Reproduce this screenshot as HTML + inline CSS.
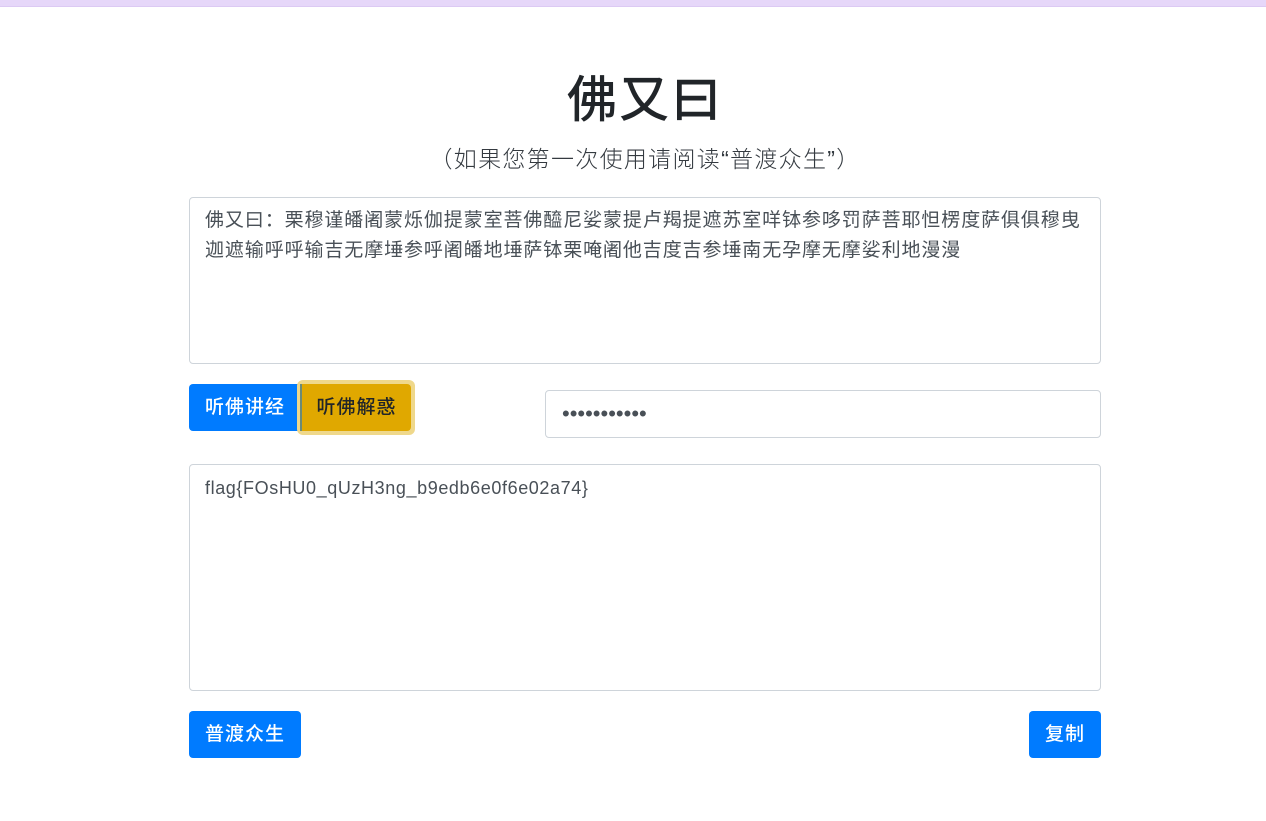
<!DOCTYPE html>
<html><head><meta charset="utf-8"><style>
body{margin:0;background:#fff;font-family:"Liberation Sans","Noto Sans CJK SC",sans-serif;color:#212529;width:1266px;height:821px;overflow:hidden;position:relative}
.top{position:absolute;left:0;top:0;width:1266px;height:6px;background:#e6d7f9;border-bottom:1px solid #dccaf3}
h1{position:absolute;top:68px;left:189px;width:912px;text-align:center;margin:0;font-size:50px;font-weight:500;line-height:64px;letter-spacing:2px}
.sub{position:absolute;top:142px;left:189px;width:912px;text-align:center;font-size:23px;font-weight:300;color:#343a40;line-height:34px;letter-spacing:1.3px}
.ta{position:absolute;left:189px;width:912px;border:1px solid #ced4da;border-radius:4px;box-sizing:border-box;padding:8px 15px;font-size:19px;line-height:30px;color:#495057}
.btn{position:absolute;height:47px;line-height:47px;font-size:19px;color:#fff;background:#007bff;border-radius:4px;text-align:center;letter-spacing:1px;font-weight:500}
</style></head><body>
<div class="top"></div>
<h1>佛又曰</h1>
<div class="sub">（如果您第一次使用请阅读“普渡众生”）</div>
<div class="ta" style="top:197px;height:167px;letter-spacing:0.9px">佛又曰：栗穆谨皤阇蒙烁伽提蒙室菩佛醯尼娑蒙提卢羯提遮苏室咩钵参哆罚萨菩耶怛楞度萨俱俱穆曳迦遮输呼呼输吉无摩埵参呼阇皤地埵萨钵栗唵阇他吉度吉参埵南无孕摩无摩娑利地漫漫</div>
<div class="btn" style="left:189px;top:384px;width:112px;border-radius:4px 0 0 4px">听佛讲经</div>
<div style="position:absolute;left:297px;top:380px;width:118px;height:55px;background:#efd88b;border-radius:6px"></div>
<div class="btn" style="left:300px;top:384px;width:111px;background:#e0a800;color:#212529;border-left:2px solid #6c8a76;box-sizing:border-box;border-radius:0 4px 4px 0">听佛解惑</div>
<div class="ta" style="left:545px;width:556px;top:390px;height:48px;padding:0 16px;line-height:46px;font-size:22px;letter-spacing:0px;color:#495057">•••••••••••</div>
<div class="ta" style="top:464px;height:227px;font-size:18px;letter-spacing:0.6px">flag{FOsHU0_qUzH3ng_b9edb6e0f6e02a74}</div>
<div class="btn" style="left:189px;top:711px;width:112px">普渡众生</div>
<div class="btn" style="left:1029px;top:711px;width:72px">复制</div>
</body></html>
